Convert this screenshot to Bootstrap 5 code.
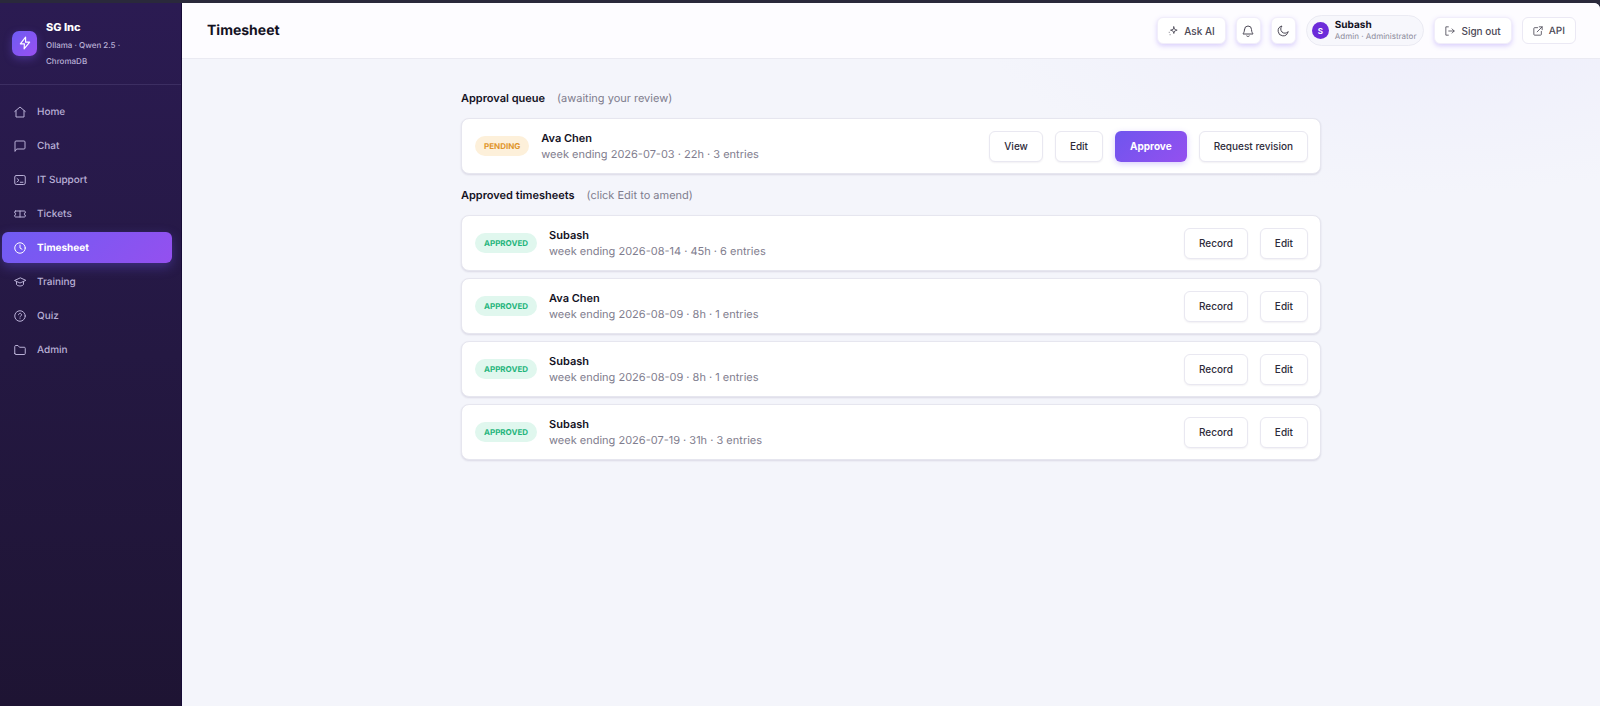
<!DOCTYPE html>
<html lang="en">
<head>
<meta charset="utf-8">
<meta name="viewport" content="width=device-width, initial-scale=1">
<title>Timesheet · SG Inc</title>
<link href="https://cdn.jsdelivr.net/npm/bootstrap@5.3.0/dist/css/bootstrap.min.css" rel="stylesheet">
<style>
  body {
    font-family: Inter, "Liberation Sans", sans-serif;
    font-size: 11px;
    line-height: 16px;
    text-rendering: geometricPrecision;
    color: #14121f;
    background: #2a293b;
  }
  svg { fill: none; stroke: currentColor; stroke-width: 2; stroke-linecap: round; stroke-linejoin: round; flex: none; }

  .shell { min-height: 100vh; padding-top: 3px; }

  /* Sidebar */
  .sidebar { width: 182px; flex: none; background: linear-gradient(180deg, #2b1b52 0%, #241842 50%, #1e1433 100%); border-right: 1px solid #160b36; color: #b9b0d6; }
  .brand { padding: 14px 12px 15px; gap: 9px; border-bottom: 1px solid #3c2e62; }
  .brand-logo { width: 25px; height: 25px; border-radius: 7px; background: linear-gradient(135deg, #6d5cf2, #9a50f2); color: #fff; box-shadow: 0 3px 8px rgba(124, 92, 246, .35); flex: none; }
  .brand-name { font-size: 11px; line-height: 20px; font-weight: 800; color: #fff; }
  .brand-sub { font-size: 8px; font-weight: 500; width: 88px; }
  .side-nav { padding: 11px 9px 12px 2px; gap: 3px; }
  .side-nav .nav-link { display: flex; align-items: center; gap: 11px; height: 31px; padding: 0 12px; border-radius: 6px; font-size: 10px; font-weight: 500; color: #b9b0d6; }
  .side-nav .nav-link:hover { color: #fff; }
  .side-nav .nav-link.active { font-weight: 700; color: #fff; background: linear-gradient(135deg, #6f5cf3, #9450ef); box-shadow: 0 4px 12px rgba(110, 92, 240, .35); }

  /* Main column */
  .main { min-width: 0; background: radial-gradient(ellipse 460px 190px at 88% 0, #ededfb 0%, rgba(237, 237, 251, 0) 100%), #f4f5fb; border-top-right-radius: 6px; }
  .topbar { min-height: 56px; padding: 0 24px 0 25px; background: #fdfcff; border-bottom: 1px solid #eaeaf2; border-top-right-radius: 6px; }
  .topbar h1 { font-size: 14px; line-height: 20px; font-weight: 700; }
  .tools { gap: 10px; }
  .btn-tool { display: inline-flex; align-items: center; justify-content: center; gap: 6px; height: 27px; padding: 0 10px; font-size: 10px; line-height: 16px; font-weight: 500; color: #4b4855; background: #fff; border: 1px solid #ebe9f4; border-radius: 6px; }
  .btn-raised { border-color: #f1eefa; box-shadow: 0 2px 5px rgba(124, 92, 246, .28); }
  .btn-square { width: 25px; padding: 0; }
  .user-pill { height: 31px; padding: 0 7px 0 5px; gap: 6px; background: #f7f7fc; border: 1px solid #ebebf3; border-radius: 16px; }
  .avatar { width: 17px; height: 17px; border-radius: 50%; background: #6c2bd9; color: #fff; font-size: 8px; font-weight: 700; }
  .user-name { font-size: 10px; line-height: 11px; font-weight: 700; }
  .user-role { font-size: 8px; line-height: 10px; color: #8b8a9a; }

  /* Timesheets */
  .sheets { max-width: 860px; padding: 31px 0; }
  .section-title { gap: 12px; margin-bottom: 12px; }
  .sheet + .section-title { margin-top: 13px; }
  .section-title h2 { font-size: 11px; line-height: 16px; font-weight: 600; }
  .soft { color: #7f7d8e; }
  .sheet { min-height: 56px; padding: 0 12px 0 13px; gap: 12px; background: #fff; border: 1px solid #e6e6ef; border-radius: 8px; box-shadow: 0 1px 2px rgba(30, 20, 70, .12); }
  .sheet-list { gap: 7px; }
  .sheet-name { font-weight: 600; }
  .status { padding: 2px 9px; border-radius: 10px; font-size: 8px; line-height: 16px; font-weight: 700; text-transform: uppercase; }
  .status-pending { color: #e0952c; background: #fdf0da; }
  .status-approved { color: #1fb57c; background: #e0f7ee; }
  .btn-act { height: 31px; padding: 0 14px; font-size: 10px; line-height: 16px; font-weight: 500; color: #2e2b3a; background: #fff; border: 1px solid #e9e8f1; border-radius: 6px; box-shadow: 0 1px 2px rgba(30, 20, 70, .06); }
  .btn-main, .btn-main:hover { color: #fff; font-weight: 700; border-color: transparent; background: linear-gradient(135deg, #6f55ee, #9450ef) border-box; box-shadow: 0 2px 6px rgba(124, 92, 246, .3); }
</style>
</head>
<body>
<div class="shell d-flex">
  <aside class="sidebar">
    <div class="brand d-flex align-items-center">
      <span class="brand-logo d-flex align-items-center justify-content-center">
        <svg width="14" height="14" viewBox="0 0 24 24"><path d="M13 2 4 13.500h7L10.500 22 20 10.500h-7z"/></svg>
      </span>
      <div>
        <div class="brand-name">SG Inc</div>
        <div class="brand-sub">Ollama · Qwen 2.5 · ChromaDB</div>
      </div>
    </div>
    <nav class="side-nav nav flex-column">
      <a class="nav-link" href="#"><svg width="12" height="12" viewBox="0 0 24 24"><path d="M1.500 11 12 2l10.500 9M4 9.500V22h16V9.500"/></svg>Home</a>
      <a class="nav-link" href="#"><svg width="12" height="12" viewBox="0 0 24 24"><path d="M2 22V4a2 2 0 0 1 2-2h16a2 2 0 0 1 2 2v12a2 2 0 0 1-2 2H6z"/></svg>Chat</a>
      <a class="nav-link" href="#"><svg width="12" height="12" viewBox="0 0 24 24"><rect x="1.500" y="3" width="21" height="18" rx="3"/><path d="m6 9 4 3.500L6 16M12.500 16.500H18"/></svg>IT Support</a>
      <a class="nav-link" href="#"><svg width="12" height="12" viewBox="0 0 24 24"><path d="M3 6h18a1.500 1.500 0 0 1 1.500 1.500V10a2 2 0 0 0 0 4v2.500A1.500 1.500 0 0 1 21 18H3a1.500 1.500 0 0 1-1.500-1.500V14a2 2 0 0 0 0-4V7.500A1.500 1.500 0 0 1 3 6zM12 6v12"/></svg>Tickets</a>
      <a class="nav-link active" href="#" aria-current="page"><svg width="12" height="12" viewBox="0 0 24 24"><circle cx="12" cy="12" r="10.500"/><path d="M12 6v6l4 2.500"/></svg>Timesheet</a>
      <a class="nav-link" href="#"><svg width="12" height="12" viewBox="0 0 24 24"><path d="M12 4 1 9l11 5 11-5zM5 11v6c3 4 11 4 14 0v-6"/></svg>Training</a>
      <a class="nav-link" href="#"><svg width="12" height="12" viewBox="0 0 24 24"><circle cx="12" cy="12" r="10.500"/><path d="M9 9.500a3 3 0 1 1 4.500 2.600c-1 .6-1.500 1-1.500 2M12 17.500v.1"/></svg>Quiz</a>
      <a class="nav-link" href="#"><svg width="12" height="12" viewBox="0 0 24 24"><path d="M1.500 19V5a2 2 0 0 1 2-2H8l3 3.500h9.500a2 2 0 0 1 2 2V19a2 2 0 0 1-2 2h-17a2 2 0 0 1-2-2z"/></svg>Admin</a>
    </nav>
  </aside>

  <div class="main flex-grow-1">
    <header class="topbar d-flex align-items-center justify-content-between">
      <h1 class="mb-0">Timesheet</h1>
      <div class="tools d-flex align-items-center">
        <button type="button" class="btn btn-tool btn-raised"><svg width="10" height="10" viewBox="0 0 24 24"><path d="M14 2l2 6 6 2-6 2-2 6-2-6-6-2 6-2zM3 15v.1M5 21v.1"/></svg>Ask AI</button>
        <button type="button" class="btn btn-tool btn-raised btn-square" aria-label="Notifications"><svg width="12" height="12" viewBox="0 0 24 24"><path d="M5 9a7 7 0 0 1 14 0c0 6 3 8 3 9H2c0-1 3-3 3-9M9.500 22c1.500 1.300 3.500 1.300 5 0"/></svg></button>
        <button type="button" class="btn btn-tool btn-raised btn-square" aria-label="Dark mode"><svg width="12" height="12" viewBox="0 0 24 24"><path d="M22 14A10 10 0 1 1 10 2a8 8 0 0 0 12 12z"/></svg></button>
        <div class="user-pill d-flex align-items-center">
          <span class="avatar d-flex align-items-center justify-content-center">S</span>
          <div>
            <div class="user-name">Subash</div>
            <div class="user-role">Admin · Administrator</div>
          </div>
        </div>
        <button type="button" class="btn btn-tool btn-raised"><svg width="10" height="10" viewBox="0 0 24 24"><path d="M8 2H2v20h6M9 12h13M17 7l5 5-5 5"/></svg>Sign out</button>
        <a href="#" class="btn btn-tool"><svg width="10" height="10" viewBox="0 0 24 24"><path d="M11 4H4a2 2 0 0 0-2 2v14a2 2 0 0 0 2 2h14a2 2 0 0 0 2-2v-7M15 2h7v7M22 2 10 14"/></svg>API</a>
      </div>
    </header>

    <main class="sheets mx-auto">
      <div class="section-title d-flex">
        <h2 class="mb-0">Approval queue</h2><span class="soft">(awaiting your review)</span>
      </div>
      <div class="sheet d-flex align-items-center">
        <span class="status status-pending">Pending</span>
        <div class="me-auto">
          <div class="sheet-name">Ava Chen</div>
          <div class="soft">week ending 2026-07-03 · 22h · 3 entries</div>
        </div>
        <button type="button" class="btn btn-act">View</button>
        <button type="button" class="btn btn-act">Edit</button>
        <button type="button" class="btn btn-act btn-main">Approve</button>
        <button type="button" class="btn btn-act">Request revision</button>
      </div>

      <div class="section-title d-flex">
        <h2 class="mb-0">Approved timesheets</h2><span class="soft">(click Edit to amend)</span>
      </div>
      <div class="sheet-list d-flex flex-column">
        <div class="sheet d-flex align-items-center">
          <span class="status status-approved">Approved</span>
          <div class="me-auto">
            <div class="sheet-name">Subash</div>
            <div class="soft">week ending 2026-08-14 · 45h · 6 entries</div>
          </div>
          <button type="button" class="btn btn-act">Record</button>
          <button type="button" class="btn btn-act">Edit</button>
        </div>
        <div class="sheet d-flex align-items-center">
          <span class="status status-approved">Approved</span>
          <div class="me-auto">
            <div class="sheet-name">Ava Chen</div>
            <div class="soft">week ending 2026-08-09 · 8h · 1 entries</div>
          </div>
          <button type="button" class="btn btn-act">Record</button>
          <button type="button" class="btn btn-act">Edit</button>
        </div>
        <div class="sheet d-flex align-items-center">
          <span class="status status-approved">Approved</span>
          <div class="me-auto">
            <div class="sheet-name">Subash</div>
            <div class="soft">week ending 2026-08-09 · 8h · 1 entries</div>
          </div>
          <button type="button" class="btn btn-act">Record</button>
          <button type="button" class="btn btn-act">Edit</button>
        </div>
        <div class="sheet d-flex align-items-center">
          <span class="status status-approved">Approved</span>
          <div class="me-auto">
            <div class="sheet-name">Subash</div>
            <div class="soft">week ending 2026-07-19 · 31h · 3 entries</div>
          </div>
          <button type="button" class="btn btn-act">Record</button>
          <button type="button" class="btn btn-act">Edit</button>
        </div>
      </div>
    </main>
  </div>
</div>
<script src="https://cdn.jsdelivr.net/npm/bootstrap@5.3.0/dist/js/bootstrap.bundle.min.js"></script>
</body>
</html>
